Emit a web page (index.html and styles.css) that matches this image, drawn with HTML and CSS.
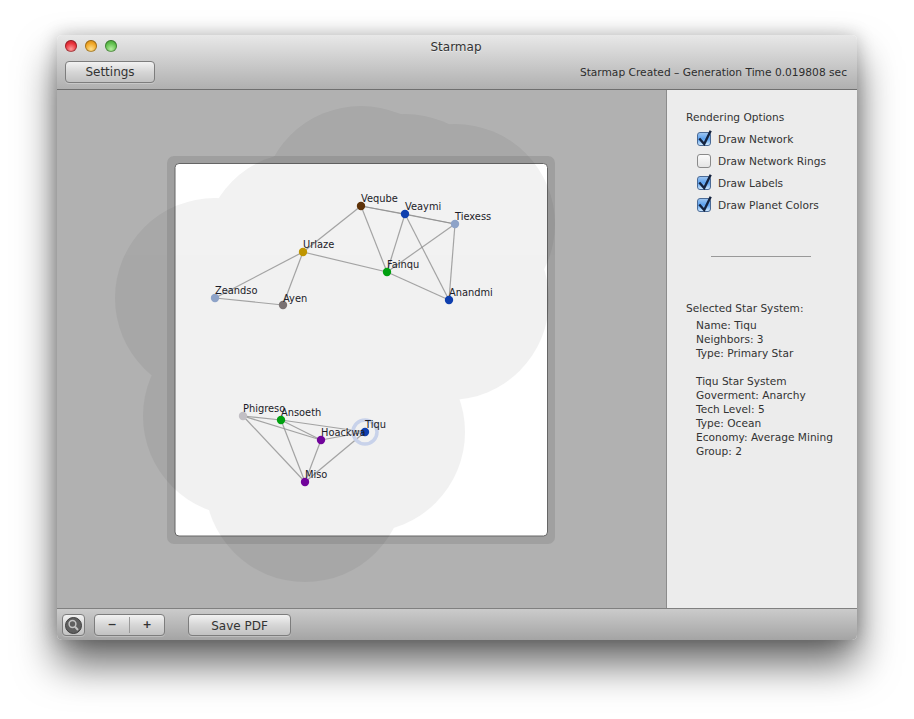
FILE: index.html
```html
<!DOCTYPE html>
<html lang="en">
    <head>
        <meta charset="UTF-8">
        <title>Starmap</title>
        <link rel="stylesheet" href="styles.css">
    </head>
    <body>
        <svg class="defs" width="0" height="0">
            <symbol id="tick" viewBox="0 0 16 18">
                <path d="M2.3 10.5 L7.2 16 L13.7 2.7" fill="none" stroke="#14233f" stroke-width="2.4"/>
            </symbol>
        </svg>

        <div class="window">
            <header class="titlebar">
                <div class="titlerow">
                    <div class="lights">
                        <span class="light red"></span>
                        <span class="light orange"></span>
                        <span class="light green"></span>
                    </div>
                    <div class="title">Starmap</div>
                </div>
                <div class="toolrow">
                    <button class="btn settings">Settings</button>
                    <span class="status">Starmap Created – Generation Time 0.019808 sec</span>
                </div>
            </header>

            <main class="main">
                <div class="stage">
                    <!-- viewBox uses window coordinates so stars read the same as the screenshot -->
                    <svg class="map" viewBox="57 90 609 518" width="609" height="518">
                        <rect class="mat" x="167" y="156" width="388" height="388" rx="7"/>
                        <rect class="paper" x="175" y="163.5" width="372.5" height="372.5" rx="4"/>

                        <g class="reach">
                            <circle cx="361" cy="206" r="100"/>
                            <circle cx="405" cy="214" r="100"/>
                            <circle cx="455" cy="224" r="100"/>
                            <circle cx="303" cy="252" r="100"/>
                            <circle cx="387" cy="272" r="100"/>
                            <circle cx="215" cy="298" r="100"/>
                            <circle cx="283" cy="305" r="100"/>
                            <circle cx="449" cy="300" r="100"/>
                            <circle cx="243" cy="416" r="100"/>
                            <circle cx="281" cy="420" r="100"/>
                            <circle cx="321" cy="440" r="100"/>
                            <circle cx="365" cy="432" r="100"/>
                            <circle cx="305" cy="482" r="100"/>
                        </g>

                        <g class="links">
                            <line x1="361" y1="206" x2="405" y2="214"/>
                            <line x1="361" y1="206" x2="455" y2="224"/>
                            <line x1="405" y1="214" x2="455" y2="224"/>
                            <line x1="361" y1="206" x2="303" y2="252"/>
                            <line x1="361" y1="206" x2="387" y2="272"/>
                            <line x1="405" y1="214" x2="387" y2="272"/>
                            <line x1="405" y1="214" x2="449" y2="300"/>
                            <line x1="455" y1="224" x2="387" y2="272"/>
                            <line x1="455" y1="224" x2="449" y2="300"/>
                            <line x1="387" y1="272" x2="449" y2="300"/>
                            <line x1="303" y1="252" x2="387" y2="272"/>
                            <line x1="303" y1="252" x2="215" y2="298"/>
                            <line x1="303" y1="252" x2="283" y2="305"/>
                            <line x1="215" y1="298" x2="283" y2="305"/>
                            <line x1="243" y1="416" x2="281" y2="420"/>
                            <line x1="243" y1="416" x2="321" y2="440"/>
                            <line x1="243" y1="416" x2="305" y2="482"/>
                            <line x1="281" y1="420" x2="321" y2="440"/>
                            <line x1="281" y1="420" x2="365" y2="432"/>
                            <line x1="281" y1="420" x2="305" y2="482"/>
                            <line x1="321" y1="440" x2="365" y2="432"/>
                            <line x1="321" y1="440" x2="305" y2="482"/>
                            <line x1="365" y1="432" x2="305" y2="482"/>
                        </g>

                        <circle class="ring" cx="365" cy="432" r="12"/>

                        <circle cx="361" cy="206" r="4.2" fill="#5e3208"/>
                        <circle cx="405" cy="214" r="4.2" fill="#0f3fae"/>
                        <circle cx="455" cy="224" r="4.2" fill="#8ea3c8"/>
                        <circle cx="303" cy="252" r="4.2" fill="#bf9500"/>
                        <circle cx="387" cy="272" r="4.2" fill="#00a010"/>
                        <circle cx="215" cy="298" r="4.2" fill="#8ea3c8"/>
                        <circle cx="283" cy="305" r="4.2" fill="#7a7272"/>
                        <circle cx="449" cy="300" r="4.2" fill="#0f3fae"/>
                        <circle cx="243" cy="416" r="4.2" fill="#c2bfc4"/>
                        <circle cx="281" cy="420" r="4.2" fill="#00a010"/>
                        <circle cx="321" cy="440" r="4.2" fill="#71049b"/>
                        <circle cx="365" cy="432" r="4.2" fill="#0f3fae"/>
                        <circle cx="305" cy="482" r="4.2" fill="#71049b"/>

                        <g class="labels">
                            <text x="361" y="202">Veqube</text>
                            <text x="405" y="210">Veaymi</text>
                            <text x="455" y="220">Tiexess</text>
                            <text x="303" y="248">Urlaze</text>
                            <text x="387" y="268">Fainqu</text>
                            <text x="215" y="294">Zeandso</text>
                            <text x="283" y="302">Ayen</text>
                            <text x="449" y="296">Anandmi</text>
                            <text x="243" y="412">Phigreso</text>
                            <text x="281" y="416">Ansoeth</text>
                            <text x="321" y="436">Hoackwa</text>
                            <text x="365" y="428">Tiqu</text>
                            <text x="305" y="478">Miso</text>
                        </g>
                    </svg>
                </div>

                <aside class="sidebar">
                    <h2 class="heading">Rendering Options</h2>
                    <ul class="options">
                        <li class="option"><span class="box on"><svg class="tick"><use href="#tick"/></svg></span>Draw Network</li>
                        <li class="option"><span class="box"></span>Draw Network Rings</li>
                        <li class="option"><span class="box on"><svg class="tick"><use href="#tick"/></svg></span>Draw Labels</li>
                        <li class="option"><span class="box on"><svg class="tick"><use href="#tick"/></svg></span>Draw Planet Colors</li>
                    </ul>
                    <hr class="divider">
                    <h2 class="heading">Selected Star System:</h2>
                    <div class="details">
                        <p>Name: Tiqu</p>
                        <p>Neighbors: 3</p>
                        <p>Type: Primary Star</p>
                        <p class="gap">Tiqu Star System</p>
                        <p>Goverment: Anarchy</p>
                        <p>Tech Level: 5</p>
                        <p>Type: Ocean</p>
                        <p>Economy: Average Mining</p>
                        <p>Group: 2</p>
                    </div>
                </aside>
            </main>

            <footer class="bottombar">
                <button class="btn lens" aria-label="Find">
                    <svg width="17" height="17" viewBox="0 0 17 17">
                        <circle cx="8.5" cy="8.5" r="8" fill="#5f5f5f" stroke="#3f3f3f"/>
                        <circle cx="7.5" cy="7" r="3.4" fill="none" stroke="#c4c4c4" stroke-width="1.5"/>
                        <line x1="10" y1="9.7" x2="13" y2="13" stroke="#c4c4c4" stroke-width="2"/>
                    </svg>
                </button>
                <div class="btn zoomgroup">
                    <span class="zoomhalf minus">−</span>
                    <span class="zoomhalf">+</span>
                </div>
                <button class="btn savepdf">Save PDF</button>
            </footer>
        </div>
    </body>
</html>
```

FILE: styles.css
```css
* {
    box-sizing: border-box;
}
body {
    margin: 0;
    padding: 35px 57px 0;
    height: 719px;
    overflow: hidden;
    background-color: #fff;
    font-family: "DejaVu Sans", "Liberation Sans", sans-serif;
    font-size: 10.6px;
    color: #333;
}
.defs {
    display: block;
}
.window {
    width: 800px;
    height: 605px;
    display: flex;
    flex-direction: column;
    border-radius: 5px;
    overflow: hidden;
    box-shadow: 0 24px 40px rgba(0, 0, 0, 0.6), 0 0 18px rgba(0, 0, 0, 0.22);
}

/* title bar */
.titlebar {
    height: 55px;
    flex: none;
    padding: 0 10px 0 8px;
    background: linear-gradient(#e8e8e8, #dadada 25%, #b0b0b0);
    border-bottom: 1px solid #6f6f6f;
}
.titlerow {
    height: 26px;
    position: relative;
    display: flex;
    align-items: center;
    justify-content: center;
}
.lights {
    position: absolute;
    left: 0;
    top: 5px;
    display: flex;
    gap: 8px;
}
.light {
    width: 12px;
    height: 12px;
    border-radius: 50%;
    box-shadow: inset 0 0 0 1px rgba(0, 0, 0, 0.3);
}
.red {
    background: radial-gradient(circle at 50% 75%, #ff9a9a, #e8303a 55%, #b5202a);
}
.orange {
    background: radial-gradient(circle at 50% 75%, #ffdf8a, #f0a524 55%, #bd7a12);
}
.green {
    background: radial-gradient(circle at 50% 75%, #b5ee9f, #5fbf4c 55%, #3b8f2c);
}
.title {
    font-size: 12px;
    color: #333;
    padding-bottom: 3px;
    text-shadow: 0 1px 0 rgba(255, 255, 255, 0.5);
}
.toolrow {
    display: flex;
    align-items: center;
    justify-content: space-between;
}
.status {
    font-size: 10.65px;
    color: #2d2d2d;
    padding-top: 1px;
}

/* buttons */
.btn {
    display: block;
    height: 22px;
    padding: 0;
    font-family: inherit;
    font-size: 12px;
    color: #333;
    background: linear-gradient(#f2f2f2, #d6d6d6 50%, #c2c2c2);
    border: 1px solid #7d7d7d;
    border-radius: 4px;
    box-shadow: 0 1px 0 rgba(255, 255, 255, 0.25);
}
.settings {
    width: 90px;
}

/* main area */
.main {
    flex: 1;
    display: flex;
    min-height: 0;
}
.stage {
    flex: none;
    width: 610px;
    background-color: #b1b1b1;
    border-right: 1px solid #8c8c8c;
}
.map {
    display: block;
}
.mat {
    fill: #a0a0a0;
}
.paper {
    fill: #fff;
    stroke: #666;
    stroke-width: 1;
}
.reach {
    opacity: 0.05;
}
.links line {
    stroke: #909090;
    stroke-width: 1.2;
    opacity: 0.8;
}
.ring {
    fill: none;
    stroke: #c8d2ea;
    stroke-width: 3.5;
}
.labels text {
    font-size: 9.85px;
    fill: #1c1c28;
}

/* right column */
.sidebar {
    flex: 1;
    padding: 21px 0 0 19px;
    background-color: #ececec;
}
.heading {
    margin: 0;
    font-size: 10.6px;
    font-weight: normal;
    line-height: 13px;
}
.options {
    list-style: none;
    margin: 4px 0 0 11px;
    padding: 0;
}
.option {
    height: 22px;
    display: flex;
    align-items: center;
    gap: 7px;
}
.box {
    width: 14px;
    height: 14px;
    position: relative;
    border: 1px solid #8a8a8a;
    border-radius: 3px;
    background: linear-gradient(#fbfbfb, #e4e4e4);
}
.box.on {
    border-color: #4a6a96;
    background: linear-gradient(#9cc4f0, #5aa0ee 50%, #cfe9ff);
}
.tick {
    position: absolute;
    left: -1px;
    top: -5px;
    width: 16px;
    height: 18px;
}
.divider {
    width: 100px;
    height: 1px;
    margin: 40px 0 45px 25px;
    border: 0;
    background-color: #999;
}
.details {
    margin: 3px 0 0 10px;
    line-height: 14px;
}
.details p {
    margin: 0;
}
.details .gap {
    margin-top: 14px;
}

/* bottom bar */
.bottombar {
    height: 32px;
    flex: none;
    display: flex;
    align-items: flex-start;
    padding: 5px 0 0 5px;
    background: linear-gradient(#cbcbcb, #a4a4a4);
    border-top: 1px solid #808080;
}
.lens {
    width: 23px;
    display: flex;
    align-items: center;
    justify-content: center;
}
.zoomgroup {
    width: 71px;
    margin-left: 9px;
    display: flex;
}
.zoomhalf {
    flex: 1;
    text-align: center;
    font-weight: bold;
    font-size: 11px;
    line-height: 19px;
}
.minus {
    border-right: 1px solid #9a9a9a;
    height: 16px;
    margin-top: 2px;
    line-height: 15px;
}
.savepdf {
    width: 103px;
    margin-left: 23px;
    padding-top: 1px;
}
```
